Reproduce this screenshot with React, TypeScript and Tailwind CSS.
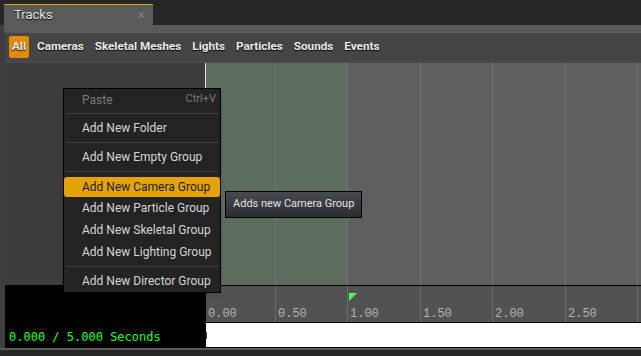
import React from 'react';

const filters = ['Cameras', 'Skeletal Meshes', 'Lights', 'Particles', 'Sounds', 'Events'];
const cols = [
  { w: 'w-[70px]', label: '0.00', green: true },
  { w: 'w-[72px]', label: '0.50', green: true },
  { w: 'w-[73px]', label: '1.00', green: false },
  { w: 'w-[72px]', label: '1.50', green: false },
  { w: 'w-[73px]', label: '2.00', green: false },
  { w: 'w-[72px]', label: '2.50', green: false },
];

const Sep = () => (
  <div className="h-[7px] flex items-center px-[2px]">
    <div className="h-px w-full bg-[#3f3f3f]"></div>
  </div>
);

const Item = ({ text }: { text: string }) => (
  <div className="h-[22px] flex items-center pl-[18px] text-[12px] text-[#d6d6d6] whitespace-nowrap">{text}</div>
);

const ContextMenu = () => {
  return (
    <div className="absolute left-[63px] top-[88px] w-[158px] bg-[#232323] border border-black font-['Roboto'] shadow-md">
      <div className="h-[21px] flex items-center justify-between pl-[18px] pr-[4px] text-[12px] text-[#7c7c7c]">
        <span>Paste</span>
        <span className="text-[11px]">Ctrl+V</span>
      </div>
      <Sep />
      <Item text="Add New Folder" />
      <Sep />
      <Item text="Add New Empty Group" />
      <Sep />
      <div className="h-[22px] pt-[2px]">
        <div className="h-[20px] flex items-center pl-[18px] text-[12px] text-[#1c1c1c] bg-[#e4a300] rounded-[3px] whitespace-nowrap">
          Add New Camera Group
        </div>
      </div>
      <Item text="Add New Particle Group" />
      <Item text="Add New Skeletal Group" />
      <Item text="Add New Lighting Group" />
      <Sep />
      <Item text="Add New Director Group" />
    </div>
  );
};

const Tooltip = () => (
  <div className="absolute left-[225px] top-[191px] w-[137px] h-[27px] border border-black bg-gradient-to-b from-[#474a50] to-[#2a2c30] flex items-center pl-[7px] text-[11px] text-[#e2e2e2] font-['Roboto'] whitespace-nowrap">
    Adds new Camera Group
  </div>
);

const App = () => {
  return (
    <div className="relative w-[641px] h-[356px] bg-[#262626] overflow-hidden font-['Roboto']">
      {/* tab row */}
      <div className="h-[25px] flex items-end pl-[4px]">
        <div className="w-[149px] h-[21px] bg-[#5a5a5a] border-t border-[#d6a800] flex items-center justify-between pl-[10px] pr-[8px]">
          <span className="text-[13px] text-[#e6e6e6] [text-shadow:0_1px_1px_#000]">Tracks</span>
          <span className="text-[14px] leading-none text-[#7e7e7e]">×</span>
        </div>
      </div>

      {/* body */}
      <div className="h-[323px] bg-[#3e3e3e] flex flex-col">
        <div className="h-[8px] ml-[4px] bg-[#5a5a5a]"></div>
        <div className="h-[28px] ml-[5px] bg-[#454545] flex items-center pl-[4px] text-[11.7px] font-bold text-[#ececec] [text-shadow:0_1px_1px_#000]">
          <div className="h-[22px] w-[20px] bg-[#e08b00] rounded-[2px] flex items-center justify-center">All</div>
          <div className="flex items-center gap-[11px] ml-[8px]">
            {filters.map((f) => (
              <span key={f}>{f}</span>
            ))}
          </div>
        </div>
        <div className="h-[2px] ml-[5px] bg-[#4a4a4a]"></div>

        {/* tracks */}
        <div className="h-[222px] ml-[5px] flex">
          <div className="w-[200px] bg-[#3d3d3d]"></div>
          <div className="w-px bg-[#f0dcdc]"></div>
          <div className="flex-1 flex bg-[#5f5f5f]">
            {cols.map((c) => (
              <div key={c.label} className={`${c.w} border-r border-[#737373] ${c.green ? 'bg-[#5d6d5d]' : ''}`}></div>
            ))}
            <div className="flex-1"></div>
          </div>
        </div>

        {/* ruler */}
        <div className="h-[37px] ml-[5px] flex">
          <div className="w-[201px] bg-black"></div>
          <div className="relative flex-1 flex bg-[#525252] border-t border-black">
            {cols.map((c) => (
              <div key={c.label} className={`${c.w} border-r border-[#6c6c6c] flex items-end pl-[2px]`}>
                <span className="text-[12px] text-[#b4b4b4] font-['Liberation_Mono',monospace] leading-[15px]">{c.label}</span>
              </div>
            ))}
            <div className="flex-1"></div>
            <svg className="absolute left-[143px] top-[7px]" width="8" height="8" viewBox="0 0 8 8">
              <polygon points="0,0 8,0 0,8" fill="#4dff4d" />
            </svg>
          </div>
        </div>

        {/* time row */}
        <div className="h-[26px] ml-[5px] flex">
          <div className="w-[201px] bg-black flex items-center pl-[4px] pt-[3px]">
            <span className="text-[12px] text-[#18ff18] font-['DejaVu_Sans_Mono',monospace]">0.000 / 5.000 Seconds</span>
          </div>
          <div className="flex-1 bg-white border-t border-b border-black flex items-center">
            <div className="w-px h-[7px] bg-[#444]"></div>
          </div>
        </div>
      </div>
      <div className="h-[2px] bg-[#5a5a5a]"></div>

      <ContextMenu />
      <Tooltip />
    </div>
  );
};

export default App;
